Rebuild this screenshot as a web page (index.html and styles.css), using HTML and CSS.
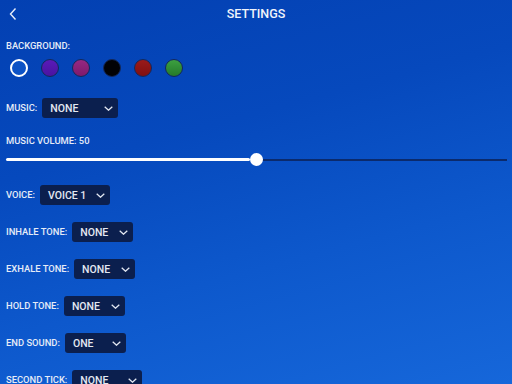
FILE: index.html
```html
<!DOCTYPE html>
<html>
<head>
<meta charset="utf-8">
<link rel="stylesheet" href="styles.css">
</head>
<body>
<div class="page">
  <header class="header">
    <span class="back">
      <svg width="10" height="14" viewBox="0 0 10 14"><path d="M7.5 1.5 L2.5 7 L7.5 12.5" fill="none" stroke="#e8eefa" stroke-width="1.4"/></svg>
    </span>
    <h1 class="title">SETTINGS</h1>
  </header>

  <main class="content">
    <section class="bg-section">
      <div class="label">BACKGROUND:</div>
      <div class="swatches">
        <span class="swatch swatch-blue selected"></span>
        <span class="swatch swatch-purple"></span>
        <span class="swatch swatch-magenta"></span>
        <span class="swatch swatch-black"></span>
        <span class="swatch swatch-red"></span>
        <span class="swatch swatch-green"></span>
      </div>
    </section>

    <div class="row row-music">
      <span class="label">MUSIC:</span>
      <div class="select w-music"><span>NONE</span><svg class="chev" width="9" height="5" viewBox="0 0 9 5"><path d="M0.7 0.7 L4.5 4.2 L8.3 0.7" fill="none" stroke="#e3e8f2" stroke-width="1.3"/></svg></div>
    </div>

    <section class="volume">
      <div class="label">MUSIC VOLUME: 50</div>
      <div class="slider">
        <div class="track-fill"></div>
        <div class="thumb"></div>
        <div class="track-rest"></div>
      </div>
    </section>

    <div class="rows">
      <div class="row">
        <span class="label">VOICE:</span>
        <div class="select w-voice"><span>VOICE 1</span><svg class="chev" width="9" height="5" viewBox="0 0 9 5"><path d="M0.7 0.7 L4.5 4.2 L8.3 0.7" fill="none" stroke="#e3e8f2" stroke-width="1.3"/></svg></div>
      </div>
      <div class="row">
        <span class="label">INHALE TONE:</span>
        <div class="select w-tone"><span>NONE</span><svg class="chev" width="9" height="5" viewBox="0 0 9 5"><path d="M0.7 0.7 L4.5 4.2 L8.3 0.7" fill="none" stroke="#e3e8f2" stroke-width="1.3"/></svg></div>
      </div>
      <div class="row">
        <span class="label">EXHALE TONE:</span>
        <div class="select w-tone"><span>NONE</span><svg class="chev" width="9" height="5" viewBox="0 0 9 5"><path d="M0.7 0.7 L4.5 4.2 L8.3 0.7" fill="none" stroke="#e3e8f2" stroke-width="1.3"/></svg></div>
      </div>
      <div class="row">
        <span class="label">HOLD TONE:</span>
        <div class="select w-tone"><span>NONE</span><svg class="chev" width="9" height="5" viewBox="0 0 9 5"><path d="M0.7 0.7 L4.5 4.2 L8.3 0.7" fill="none" stroke="#e3e8f2" stroke-width="1.3"/></svg></div>
      </div>
      <div class="row">
        <span class="label">END SOUND:</span>
        <div class="select w-tone"><span>ONE</span><svg class="chev" width="9" height="5" viewBox="0 0 9 5"><path d="M0.7 0.7 L4.5 4.2 L8.3 0.7" fill="none" stroke="#e3e8f2" stroke-width="1.3"/></svg></div>
      </div>
      <div class="row">
        <span class="label">SECOND TICK:</span>
        <div class="select w-voice"><span>NONE</span><svg class="chev" width="9" height="5" viewBox="0 0 9 5"><path d="M0.7 0.7 L4.5 4.2 L8.3 0.7" fill="none" stroke="#e3e8f2" stroke-width="1.3"/></svg></div>
      </div>
    </div>
  </main>
</div>
</body>
</html>
```

FILE: styles.css
```css
html, body {
  margin: 0;
  padding: 0;
  width: 512px;
  height: 384px;
  overflow: hidden;
}

body {
  font-family: "Open Sans", "Noto Sans", sans-serif;
  color: #e6ecf7;
  background: linear-gradient(165deg, #0340b2 0%, #0649bd 35%, #0d58cc 65%, #1667da 100%);
}

.page {
  display: flex;
  flex-direction: column;
  height: 384px;
}

.header {
  position: relative;
  height: 28px;
  display: flex;
  align-items: center;
  justify-content: center;
}

.back {
  position: absolute;
  left: 8px;
  top: 7px;
  display: flex;
}

.title {
  margin: 0;
  font-family: Roboto, "Open Sans", sans-serif;
  font-size: 12.5px;
  font-weight: 500;
  line-height: 28px;
  color: #f0f4fb;
}

.content {
  display: flex;
  flex-direction: column;
  padding: 12px 5px 0 6px;
}

.label {
  font-family: Roboto, "Open Sans", sans-serif;
  font-size: 9.4px;
  font-weight: 500;
  line-height: 12px;
  color: #e6ecf7;
  white-space: nowrap;
}

.bg-section {
  display: flex;
  flex-direction: column;
  gap: 7px;
}

.swatches {
  display: flex;
  gap: 13px;
  padding-left: 4px;
}

.swatch {
  width: 18px;
  height: 18px;
  box-sizing: border-box;
  border-radius: 50%;
  border: 1px solid #14285a;
}

.swatch.selected {
  border: 2px solid #ffffff;
}

.swatch-blue { background: #0c52c6; }
.swatch-purple { background: linear-gradient(180deg, #5a1ab8, #4a14a0); }
.swatch-magenta { background: linear-gradient(180deg, #962882, #7e1a6c); }
.swatch-black { background: #020205; }
.swatch-red { background: linear-gradient(180deg, #9a1a1a, #801010); }
.swatch-green { background: linear-gradient(180deg, #3ca040, #257a2a); }

.row {
  display: flex;
  align-items: center;
  gap: 5px;
  height: 20px;
}

.row-music {
  margin-top: 21px;
}

.select {
  box-sizing: border-box;
  height: 20px;
  display: flex;
  align-items: center;
  justify-content: space-between;
  padding: 0 5px 0 8px;
  background: #0b1f4e;
  border-radius: 3px;
  font-family: Roboto, "Open Sans", sans-serif;
  font-size: 10.5px;
  font-weight: 500;
  color: #e3e8f2;
}

.w-music { width: 76px; }
.w-voice { width: 70px; }
.w-tone { width: 61px; }

.chev {
  display: block;
}

.volume {
  display: flex;
  flex-direction: column;
  margin-top: 17px;
  gap: 6px;
}

.slider {
  display: flex;
  align-items: center;
  height: 13px;
  width: 501px;
}

.track-fill {
  width: 244px;
  height: 3px;
  background: #ffffff;
  border-radius: 2px;
}

.thumb {
  width: 13px;
  height: 13px;
  border-radius: 50%;
  background: #ffffff;
  flex: none;
}

.track-rest {
  flex: 1;
  height: 2px;
  background: #0b2a6c;
}

.rows {
  display: flex;
  flex-direction: column;
  gap: 17px;
  margin-top: 19px;
}
```
